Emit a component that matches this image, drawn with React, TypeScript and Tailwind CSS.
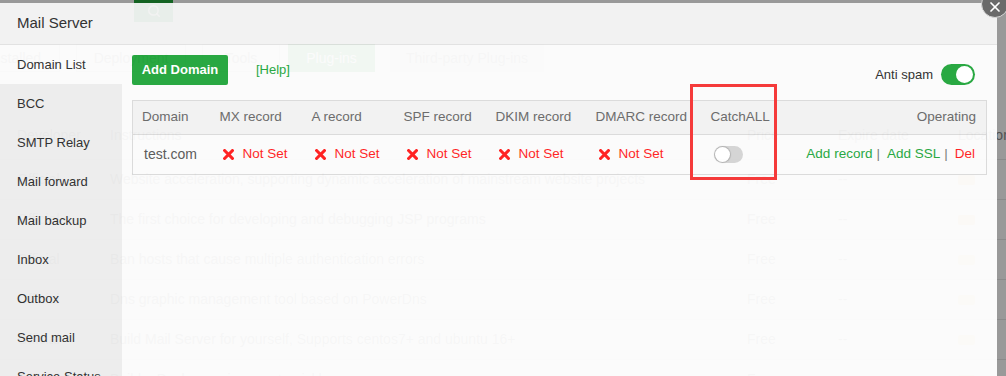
import React from 'react';
import { Search, X } from 'lucide-react';

const sideItems = [
  'Domain List',
  'BCC',
  'SMTP Relay',
  'Mail forward',
  'Mail backup',
  'Inbox',
  'Outbox',
  'Send mail',
  'Service Status',
];

const ghostRows = [
  'Website acceleration, supporting dynamic acceleration of mainstream website projects',
  'The first choice for developing and debugging JSP programs',
  'Ban hosts that cause multiple authentication errors',
  'Dns graphic management tool based on PowerDns',
  'Build Mail Server for yourself, Supports centos7+ and ubuntu 16+',
  'Build a Docker environment quickly',
];

const records = ['MX', 'A', 'SPF', 'DKIM', 'DMARC'];

const RedX: React.FC = () => (
  <svg width="11" height="11" viewBox="0 0 11 11" className="shrink-0">
    <path d="M1.6 1.6 L9.4 9.4 M9.4 1.6 L1.6 9.4" stroke="#ff1a1a" strokeWidth="3" strokeLinecap="square" />
  </svg>
);

const Toggle: React.FC<{ on?: boolean }> = ({ on }) =>
  on ? (
    <div className="w-[34px] h-[21px] rounded-full bg-[#20a53a] flex items-center justify-end px-[2px]">
      <div className="w-[17px] h-[17px] rounded-full bg-white" />
    </div>
  ) : (
    <div className="w-[29px] h-[17px] rounded-full bg-[#d4d4d4] flex items-center px-px">
      <div className="w-[15px] h-[15px] rounded-full bg-white shadow-[0_0_1px_1px_rgba(0,0,0,0.18)]" />
    </div>
  );

// faint page that shows through the half-faded layer
const GhostPage: React.FC = () => (
  <div className="absolute inset-0 bg-white text-[#8a8a8a] text-[14px]">
    <div className="h-[44px] pl-[134px]">
      <div className="w-[39px] h-[22px] bg-[#20a53a] flex items-center justify-center">
        <Search size={14} color="white" strokeWidth={2.5} />
      </div>
    </div>
    <div className="flex h-[28px] ml-[-30px]">
      <div className="w-[90px] border border-[#e2e2e2] flex items-center justify-center">Installed</div>
      <div className="w-[110px] ml-[16px] border border-[#e2e2e2] flex items-center justify-center">Deployment</div>
      <div className="w-[78px] ml-[16px] border border-[#e2e2e2] flex items-center justify-center">Tools</div>
      <div className="w-[87px] ml-[8px] bg-[#20a53a] text-white flex items-center justify-center">Plug-ins</div>
      <div className="w-[154px] ml-[15px] bg-[#f0f0f0] flex items-center justify-center">Third-party Plug-ins</div>
    </div>
    <div className="mt-[40px] h-[48px] grid grid-cols-[110px_637px_91px_120px_1fr] items-center border-b border-[#e6e6e6]">
      <div className="pl-[17px]">Developer</div>
      <div>Instructions</div>
      <div>Price</div>
      <div>Expire date</div>
      <div>Location</div>
    </div>
    {ghostRows.map((r) => (
      <div key={r} className="h-[40px] grid grid-cols-[110px_637px_91px_120px_1fr] items-center border-b border-[#e6e6e6]">
        <div className="pl-[17px]">Official</div>
        <div className="whitespace-nowrap">{r}</div>
        <div>Free</div>
        <div>--</div>
        <div>
          <div className="w-[17px] h-[10px] rounded-[2px] bg-[#fbdc9c]" />
        </div>
      </div>
    ))}
  </div>
);

export default function App() {
  return (
    <div
      className="relative w-[1006px] h-[376px] overflow-hidden bg-white"
      style={{ fontFamily: '"Segoe UI", "Liberation Sans", Arial, sans-serif' }}
    >
      <GhostPage />

      {/* shade outside the layer */}
      <div className="absolute left-0 top-0 w-full h-[3px] bg-black/40" />
      <div className="absolute left-[997px] top-[3px] right-0 bottom-0 bg-black/40" />

      {/* layer window */}
      <div className="absolute left-0 top-[3px] w-[997px] h-[373px] flex flex-col text-[#2a2a2a] opacity-[0.955]">
        <div className="h-[42px] shrink-0 bg-[#f2f2f2] border-b border-[#e2e2e2] flex items-center pl-[17px] text-[15px]">
          Mail Server
        </div>
        <div className="flex flex-1 min-h-0">
          <div className="w-[122px] shrink-0 overflow-hidden">
            {sideItems.map((s, i) => (
              <div
                key={s}
                className={`h-[39px] flex items-center pl-[17px] text-[13px] whitespace-nowrap ${
                  i === 0 ? 'bg-[#fbfbfb]' : 'bg-[#ededed]'
                }`}
              >
                {s}
              </div>
            ))}
          </div>

          <div className="flex-1 bg-[#fbfbfb] pt-[10px] px-[10px]">
            <div className="flex items-start justify-between">
              <div className="flex items-center h-[30px]">
                <button className="h-[30px] w-[96px] rounded-[2px] bg-[#20a53a] text-white text-[13px] font-bold">
                  Add Domain
                </button>
                <span className="ml-[28px] text-[13px] text-[#20a53a]">[Help]</span>
              </div>
              <div className="mt-[9px] mr-[12px] flex items-center gap-[8px]">
                <span className="text-[13px]">Anti spam</span>
                <Toggle on />
              </div>
            </div>

            <table className="mt-[15px] w-full table-fixed border-collapse border border-[#dadada] text-[13.5px]">
              <colgroup>
                <col className="w-[78px]" />
                <col className="w-[92px]" />
                <col className="w-[92px]" />
                <col className="w-[92px]" />
                <col className="w-[100px]" />
                <col className="w-[115px]" />
                <col className="w-[80px]" />
                <col />
              </colgroup>
              <thead>
                <tr className="h-[34px] bg-[#f2f2f2] text-[#666]">
                  <th className="font-normal text-left pl-[9px]">Domain</th>
                  {records.map((r) => (
                    <th key={r} className="font-normal text-left pl-[9px] whitespace-nowrap">
                      {r} record
                    </th>
                  ))}
                  <th className="font-normal text-left pl-[9px]">CatchALL</th>
                  <th className="font-normal text-right pr-[10px]">Operating</th>
                </tr>
              </thead>
              <tbody>
                <tr className="h-[40px] border-t border-[#dadada]">
                  <td className="pl-[11px] text-[#555] text-[14px]">test.com</td>
                  {records.map((r) => (
                    <td key={r} className="pl-[12px]">
                      <div className="flex items-center gap-[9px] text-[#ff1a1a] whitespace-nowrap">
                        <RedX />
                        <span>Not Set</span>
                      </div>
                    </td>
                  ))}
                  <td className="pl-[12px]">
                    <Toggle />
                  </td>
                  <td className="pr-[11px] text-right whitespace-nowrap">
                    <span className="text-[#20a53a]">Add record</span>
                    <span className="ml-[4px] mr-[7px] text-[#777]">|</span>
                    <span className="text-[#20a53a]">Add SSL</span>
                    <span className="ml-[4px] mr-[7px] text-[#777]">|</span>
                    <span className="text-[#ff1a1a]">Del</span>
                  </td>
                </tr>
              </tbody>
            </table>
          </div>
        </div>
      </div>

      {/* close button */}
      <div className="absolute left-[981px] top-[-10px] w-[28px] h-[28px] rounded-full bg-[#6a6a6a] border-[1.5px] border-[#d8d8d8] flex items-center justify-center">
        <X size={16} color="white" strokeWidth={2.6} className="mt-[5px]" />
      </div>

      {/* annotation box */}
      <div className="absolute left-[690px] top-[84px] w-[87px] h-[96px] border-[3px] border-[#f53a3a]" />
    </div>
  );
}
